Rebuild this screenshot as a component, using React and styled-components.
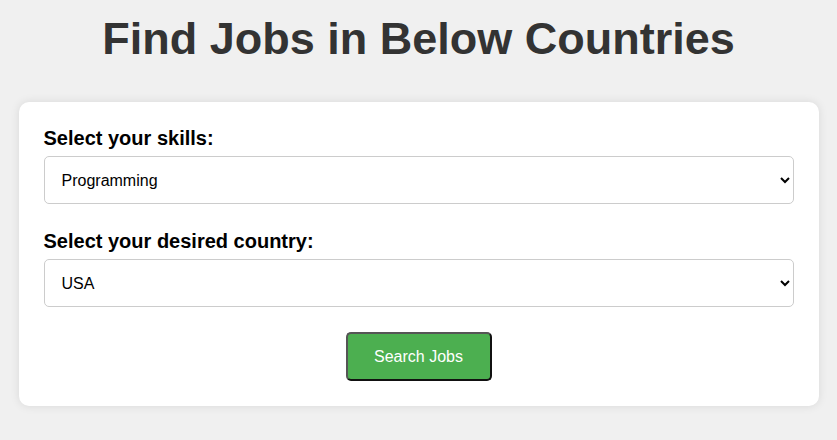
import React from "react";
import styled, { createGlobalStyle } from "styled-components";

const Global = createGlobalStyle`
  html, body { margin: 0; padding: 0; }
  body {
    background: #f0f0f0;
    font-family: "Liberation Sans", Arial, sans-serif;
    padding: 10px 0 20px;
  }
`;

const Title = styled.h1`
  margin: 0 0 34px;
  text-align: center;
  color: #333;
  font-size: 45px;
  line-height: 58px;
  font-weight: bold;
`;

const Card = styled.form`
  max-width: 800px;
  margin: 0 auto;
  box-sizing: border-box;
  background: #fff;
  border-radius: 10px;
  padding: 25px;
  box-shadow: 0 0 10px rgba(0, 0, 0, 0.1);
  display: flex;
  flex-direction: column;
`;

const Label = styled.label`
  display: block;
  font-size: 20px;
  font-weight: bold;
  color: #000;
  line-height: 23px;
  margin: 0 0 6px;
`;

const Select = styled.select`
  width: 100%;
  height: 48px;
  box-sizing: border-box;
  padding: 0 12px 0 13px;
  font-family: "Liberation Sans", Arial, sans-serif;
  font-size: 16px;
  color: #000;
  background: #fff;
  border: 1px solid #ccc;
  border-radius: 5px;
  margin-bottom: ${(p) => (p.$last ? "25px" : "26px")};
`;

const Button = styled.button`
  align-self: center;
  width: 146px;
  height: 49px;
  background: #4caf50;
  color: #fff;
  font-family: "Liberation Sans", Arial, sans-serif;
  font-size: 16px;
  border-width: 2px;
  border-style: solid;
  border-color: #555 #111 #111 #555;
  border-radius: 5px;
  cursor: pointer;
`;

export default function App() {
  return (
    <>
      <Global />
      <Title>Find Jobs in Below Countries</Title>
      <Card onSubmit={(e) => e.preventDefault()}>
        <Label htmlFor="skills">Select your skills:</Label>
        <Select id="skills" defaultValue="Programming">
          <option>Programming</option>
          <option>Design</option>
          <option>Marketing</option>
        </Select>
        <Label htmlFor="country">Select your desired country:</Label>
        <Select id="country" defaultValue="USA" $last>
          <option>USA</option>
          <option>Canada</option>
          <option>UK</option>
        </Select>
        <Button type="submit">Search Jobs</Button>
      </Card>
    </>
  );
}
